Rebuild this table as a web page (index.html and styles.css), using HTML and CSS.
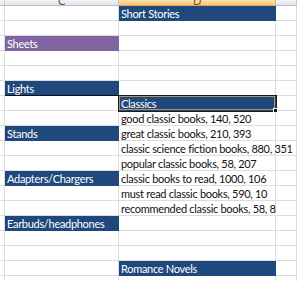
FILE: index.html
```html
<!DOCTYPE html>
<html>
<head>
<meta charset="utf-8">
<link rel="stylesheet" href="styles.css">
</head>
<body>
<div class="sheet">
  <div class="hd"></div><div class="hd"><span>C</span></div><div class="hd sel"><span>D</span></div><div class="hd"></div>

  <div class="c"></div><div class="c"></div><div class="c blue">Short Stories</div><div class="c"></div>
  <div class="c"></div><div class="c"></div><div class="c"></div><div class="c"></div>
  <div class="c"></div><div class="c purple">Sheets</div><div class="c"></div><div class="c"></div>
  <div class="c"></div><div class="c"></div><div class="c"></div><div class="c"></div>
  <div class="c"></div><div class="c"></div><div class="c"></div><div class="c"></div>
  <div class="c"></div><div class="c blue dark-bottom">Lights</div><div class="c"></div><div class="c"></div>
  <div class="c"></div><div class="c"></div><div class="c blue active">Classics<i class="handle"></i></div><div class="c"></div>
  <div class="c"></div><div class="c"></div><div class="c">good classic books, 140, 520</div><div class="c"></div>
  <div class="c"></div><div class="c blue">Stands</div><div class="c">great classic books, 210, 393</div><div class="c"></div>
  <div class="c"></div><div class="c"></div><div class="c">classic science fiction books, 880, 351</div><div class="c"></div>
  <div class="c"></div><div class="c"></div><div class="c">popular classic books, 58, 207</div><div class="c"></div>
  <div class="c"></div><div class="c blue">Adapters/Chargers</div><div class="c">classic books to read, 1000, 106</div><div class="c"></div>
  <div class="c"></div><div class="c"></div><div class="c">must read classic books, 590, 10</div><div class="c"></div>
  <div class="c"></div><div class="c"></div><div class="c">recommended classic books, 58, 8</div><div class="c"></div>
  <div class="c"></div><div class="c blue">Earbuds/headphones</div><div class="c"></div><div class="c"></div>
  <div class="c"></div><div class="c"></div><div class="c"></div><div class="c"></div>
  <div class="c"></div><div class="c"></div><div class="c"></div><div class="c"></div>
  <div class="c"></div><div class="c"></div><div class="c blue">Romance Novels</div><div class="c"></div>
  <div class="c"></div><div class="c"></div><div class="c"></div><div class="c"></div>
</div>
</body>
</html>
```
FILE: styles.css
```css
* { box-sizing: border-box; }
html, body { margin: 0; padding: 0; background: #fff; overflow: hidden; }
.sheet {
  display: grid;
  grid-template-columns: 5px 114px 157px 21px;
  grid-template-rows: 6px repeat(19, 15px);
  width: 297px;
  font-family: "Lato", "Liberation Sans", sans-serif;
  font-size: 11px;
  letter-spacing: -0.3px;
  color: #111;
}
.hd {
  background: linear-gradient(#f3f5f8, #e1e6ec);
  border-right: 1px solid #c5cad1;
  border-bottom: 1px solid #b9bfc7;
  overflow: hidden;
  position: relative;
  font-size: 11px;
  color: #555;
}
.hd span {
  position: absolute;
  left: 50%;
  bottom: -1px;
  line-height: 11px;
  transform: translateX(-50%);
}
.hd.sel {
  background: linear-gradient(#fbe2b0, #f6c77a);
  border-bottom-color: #e9a84c;
  border-right-color: #e3b36c;
  color: #6d5430;
}
.c {
  border-right: 1px solid #dadcdf;
  border-bottom: 1px solid #dadcdf;
  white-space: nowrap;
  overflow: visible;
  line-height: 14px;
  padding: 1px 0 0 2px;
  position: relative;
}
.blue {
  background: #1f497d;
  border-color: #1f497d;
  color: #fff;
  overflow: hidden;
}
.purple {
  background: #8064a2;
  border-color: #8064a2;
  color: #fff;
  overflow: hidden;
}
.dark-bottom { border-bottom-color: #111; }
.active {
  overflow: visible;
  box-shadow: 0 0 0 1px #1a1a1a, inset 0 0 0 1px #b8925c;
  z-index: 2;
}
.handle {
  position: absolute;
  right: -3px;
  bottom: -3px;
  width: 5px;
  height: 5px;
  background: #111;
  border: 1px solid #fff;
}
```
